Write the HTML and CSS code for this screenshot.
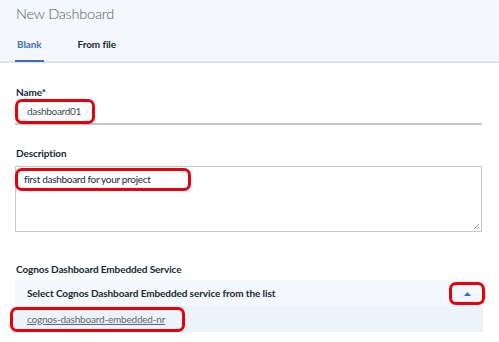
FILE: index.html
```html
<!DOCTYPE html>
<html>
<head>
<title>New Dashboard</title>
<meta name="viewport" content="width=device-width, initial-scale=1.0">
<link rel="stylesheet" href="styles.css">
</head>
<body>

<div class="header">
  <h1 class="title">New Dashboard</h1>
  <div class="tabs">
    <span class="tab active">Blank</span>
    <span class="tab">From file</span>
  </div>
</div>

<div class="form">
  <div class="field field-name">
    <div class="field-label">Name*</div>
    <div class="line-input">
      <span class="mark mark-name">dashboard01</span>
    </div>
  </div>

  <div class="field field-desc">
    <div class="field-label">Description</div>
    <div class="textarea">
      <span class="mark mark-desc">first dashboard for your project</span>
      <svg class="grip" width="8" height="8" viewBox="0 0 8 8">
        <path d="M7 2 L2 7 M7 5 L5 7" stroke="#9aa3aa" stroke-width="1"/>
      </svg>
    </div>
  </div>

  <div class="field field-service">
    <div class="field-label">Cognos Dashboard Embedded Service</div>
    <div class="select-head">
      <span>Select Cognos Dashboard Embedded service from the list</span>
      <span class="mark mark-caret">
        <svg width="7" height="4" viewBox="0 0 7 4"><path d="M0 4 L3.5 0 L7 4 Z" fill="#3d70b2"/></svg>
      </span>
    </div>
    <div class="select-list">
      <span class="mark mark-option"><a class="option">cognos-dashboard-embedded-nr</a></span>
    </div>
  </div>
</div>

</body>
</html>
```

FILE: styles.css
```css
body {
  margin: 0;
  font-family: Lato, "Noto Sans", sans-serif;
  color: #152935;
  background: #fff;
}

/* header + tabs */
.header {
  background-color: #f4f7fb;
  border-bottom: 2px solid #dfe3e6;
  padding: 0 15px;
  height: 61px;
}
.title {
  margin: 0;
  padding-top: 3px;
  font-size: 14.5px;
  font-weight: 300;
  line-height: 22px;
  color: #4f5d68;
  padding-left: 1px;
  letter-spacing: -0.2px;
}
.tabs {
  display: flex;
  gap: 32px;
  margin-top: 12px;
}
.tab {
  font-size: 10px;
  font-weight: 700;
  line-height: 14px;
  padding: 0 2px 9px;
  color: #152935;
  border-bottom: 2px solid transparent;
  letter-spacing: -0.1px;
}
.tab.active {
  color: #3d70b2;
  border-bottom-color: #3d70b2;
}

/* form */
.form {
  padding: 0 17px 0 15px;
}
.field-label {
  font-size: 10px;
  font-weight: 700;
  line-height: 14px;
  color: #152935;
  padding-left: 1px;
  white-space: nowrap;
  letter-spacing: -0.1px;
}
.field-name {
  padding-top: 22px;
}
.line-input {
  border-bottom: 2px solid #c0c6cc;
  height: 24px;
  padding-top: 0;
}
.mark {
  display: inline-block;
  border: 3px solid #e8000b;
  border-radius: 7px;
  box-sizing: border-box;
  white-space: nowrap;
}
.mark-name {
  font-size: 10px;
  letter-spacing: -0.3px;
  line-height: 19px;
  padding: 0 0 0 9px;
  width: 80px;
  color: #3c4a54;
}

.field-desc {
  padding-top: 21px;
}
.textarea {
  position: relative;
  margin-top: 6px;
  height: 66px;
  border: 1px solid #c4c9cd;
  box-sizing: border-box;
}
.mark-desc {
  margin: -1px 0 0 -1px;
  width: 176px;
  padding-left: 6px;
  font-size: 10px;
  letter-spacing: -0.3px;
  line-height: 17px;
  color: #152935;
}
.grip {
  position: absolute;
  right: 1px;
  bottom: 1px;
}

.field-service {
  padding-top: 30px;
}
.select-head {
  display: flex;
  justify-content: space-between;
  align-items: center;
  margin-top: 4px;
  height: 26px;
  background-color: #f4f7fb;
  padding-left: 12px;
  font-size: 10px;
  letter-spacing: -0.1px;
  font-weight: 700;
  white-space: nowrap;
}
.mark-caret {
  width: 36px;
  height: 23px;
  margin-right: -3px;
  display: flex;
  align-items: center;
  justify-content: center;
  padding-top: 1px;
}
.select-list {
  height: 26px;
  background-color: #edf3fa;
  box-shadow: 0 1px 2px rgba(0, 0, 0, 0.18);
  display: flex;
  align-items: center;
}
.mark-option {
  margin-left: -5px;
  width: 175px;
  height: 25px;
  padding-left: 14px;
  font-size: 10px;
  letter-spacing: -0.2px;
  line-height: 19px;
}
.option {
  color: #5a6872;
  text-decoration: underline;
}
```
